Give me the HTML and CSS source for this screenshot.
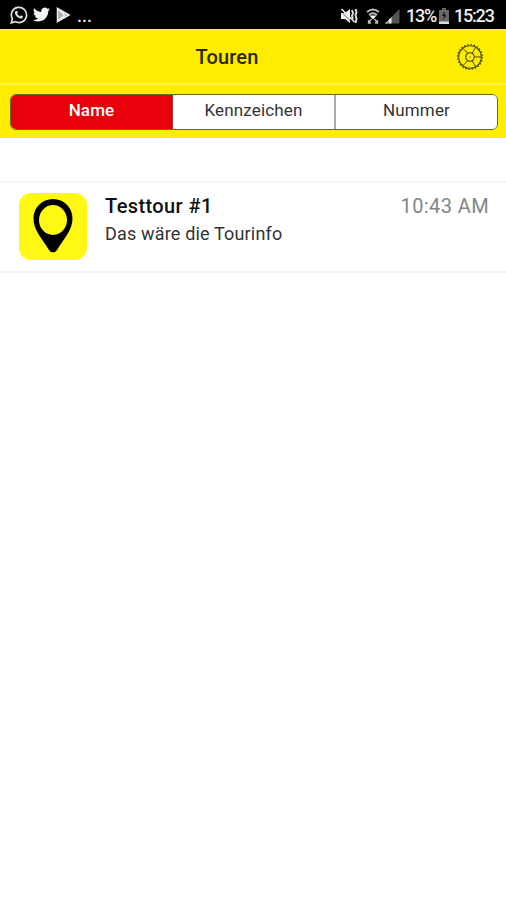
FILE: index.html
```
<!DOCTYPE html>
<html lang="de">
<head>
    <meta charset="UTF-8">
    <meta name="viewport" content="width=device-width, initial-scale=1.0">
    <title>Touren</title>
    <link rel="stylesheet" href="styles.css">
</head>
<body>
    <div class="status-bar">
        <div class="status-left">
            <svg class="icon-whatsapp" width="18" height="18" viewBox="0 0 18 18">
                <path d="M1.3 16.8l1.1-4.1a7.6 7.6 0 1 1 3 2.9z" fill="none" stroke="#ddd" stroke-width="1.7"/>
                <path d="M5.6 5.2c.7-.8 1.5-.7 1.8 0l.6 1.4-.8 1.2c.6 1.2 1.5 2 2.8 2.6l1-1.1 1.9.9c.4 1.4-.8 2.5-2.3 2.4-2.9-.4-5.5-3.1-5.7-5.8 0-.6.2-1.2.7-1.6z" fill="#ddd"/>
            </svg>
            <svg class="icon-twitter" width="17" height="15" viewBox="0 0 24 20">
                <path d="M23.9 2.6a10 10 0 0 1-2.8.8 4.9 4.9 0 0 0 2.2-2.7 10 10 0 0 1-3.1 1.2 4.9 4.9 0 0 0-8.4 4.5A14 14 0 0 1 1.7 1.2a4.9 4.9 0 0 0 1.5 6.6 4.9 4.9 0 0 1-2.2-.6 4.9 4.9 0 0 0 3.9 4.9 4.9 4.9 0 0 1-2.2.1 4.9 4.9 0 0 0 4.6 3.4A9.9 9.9 0 0 1 0 17.6 14 14 0 0 0 7.6 19.8c9.1 0 14-7.5 14-14.6a10 10 0 0 0 2.3-2.6z" fill="#f4f4f4"/>
            </svg>
            <svg class="icon-play" width="15" height="16" viewBox="0 0 15 16">
                <path d="M1 1l13 7-13 7z" fill="#aaa"/>
                <path d="M1.5 1.5v13l7-6.5zM1.5 1.5l11.5 6.5-11.5 6.5" fill="none" stroke="#eee" stroke-width="1.5"/>
            </svg>
            <span class="more">...</span>
        </div>
        <div class="status-right">
            <svg class="icon-mute" width="18" height="16" viewBox="0 0 18 16">
                <path d="M1 5h4l5-4v14l-5-4H1z" fill="#f4f4f4"/>
                <path d="M0 2.5l13 13" stroke="#000" stroke-width=".6"/>
                <path d="M1.5 1l13 13" stroke="#eee" stroke-width="1.6"/>
                <path d="M12 2l1 3-1 3 1 3M15.500 1l1 3-1 3 1 4-1 4" fill="none" stroke="#ddd" stroke-width="2"/>
            </svg>
            <svg class="icon-wifi" width="14" height="16" viewBox="0 0 14 16">
                <path d="M1 4q6-5 12 0M3 7q4-3.5 8 0" fill="none" stroke="#bbb" stroke-width="1.9"/>
                <path d="M3.5 7.5h7L7 11.5z" fill="#fff"/>
                <path d="M2.5 15l3-4M2.5 12v3H5M11.5 15l-3-4M11.5 12v3H9" fill="none" stroke="#bbb" stroke-width="1.3"/>
            </svg>
            <svg class="icon-signal" width="15" height="16" viewBox="0 0 15 16">
                <path d="M0 15.5L14.5 1v14.5z" fill="#555"/>
                <path d="M0 15.5l2.5-2.5v2.5zM3.5 12l3-3v6.500h-3z" fill="#eee"/>
            </svg>
            <span class="percent">13%</span>
            <svg class="icon-battery" width="10" height="16" viewBox="0 0 10 16">
                <path d="M3 0h4v2h3v14H0V2h3z" fill="#686868"/>
                <path d="M6 3L3 8h2l-1 4 3.500-5h-2z" fill="#111"/>
                <path d="M0 13.5h10V16H0z" fill="#ddd"/>
            </svg>
            <span class="clock">15:23</span>
        </div>
    </div>

    <header class="header">
        <h1 class="title">Touren</h1>
        <svg class="icon-gear" width="28" height="28" viewBox="-14 -14 28 28">
            <g fill="none" stroke="#4c4600">
                <circle r="11.3" stroke-width="1.1"/>
                <circle r="12.3" stroke-width="1.3" stroke-dasharray="1.6 1.62"/>
                <circle r="4.3" stroke-width="1.1"/>
                <path d="M4.3 0h7M2.150 3.7l3.5 6.1M-2.150 3.7l-5 5M-2.150-3.7l-5-5M2.150-3.7l3.5-6.1" stroke-width="1"/>
            </g>
            <circle r=".8" fill="#8a8000"/>
        </svg>
    </header>

    <nav class="filter">
        <div class="segments">
            <button class="segment active">Name</button>
            <button class="segment">Kennzeichen</button>
            <button class="segment">Nummer</button>
        </div>
    </nav>

    <main class="tour-list">
        <article class="tour">
            <div class="tour-icon">
                <svg width="40" height="54" viewBox="0 0 40 54">
                    <path fill-rule="evenodd" d="M20 0C9 0 .5 8.5 .5 19.5c0 12 9 20.5 15.3 31.2 2 3.4 6.4 3.4 8.4 0C30.5 40 39.5 31.5 39.5 19.5 39.5 8.5 31 0 20 0zM20 6a14 15 0 1 1 0 30 14 15 0 1 1 0-30z"/>
                </svg>
            </div>
            <div class="tour-text">
                <h2 class="tour-name">Testtour #1</h2>
                <p class="tour-info">Das wäre die Tourinfo</p>
            </div>
            <time class="tour-time">10:43 AM</time>
        </article>
    </main>
</body>
</html>
```
FILE: styles.css
```
* {
    box-sizing: border-box;
}

body {
    margin: 0;
    min-height: 900px;
    background-color: #fff;
    color: #111;
    font-family: Roboto, "Liberation Sans", sans-serif;
}

/* Status bar */
.status-bar {
    display: flex;
    justify-content: space-between;
    height: 29px;
    padding: 2px 11px 0 10px;
    background-color: #000;
    color: #eee;
}

.status-left,
.status-right {
    display: flex;
    align-items: center;
}

.icon-whatsapp {
    margin-bottom: 2px;
}

.icon-twitter {
    margin-left: 5px;
    margin-bottom: 2px;
}

.icon-play {
    margin-left: 6px;
    margin-bottom: 2px;
}

.more {
    margin-left: 6px;
    font-size: 18px;
    font-weight: 500;
    line-height: 26px;
}

.icon-wifi {
    margin-left: 8px;
}

.icon-signal {
    margin-left: 5px;
}

.percent,
.clock {
    font-size: 18px;
    font-weight: 500;
    line-height: 27px;
    letter-spacing: -1.2px;
}

.percent {
    width: 29px;
    margin-left: 6px;
}

.icon-battery {
    margin-left: 4px;
}

.clock {
    width: 40px;
    margin-left: 5px;
    margin-right: 1px;
}

/* Header */
.header {
    display: flex;
    align-items: center;
    justify-content: flex-end;
    height: 56px;
    padding-top: 1px;
    padding-right: 22px;
    border-bottom: 2px solid #fff04a;
    background-color: #ffed00;
}

.title {
    flex: 1;
    margin: 0;
    padding-right: 2px;
    font-size: 20px;
    font-weight: 500;
    line-height: 28px;
    letter-spacing: 0.2px;
    text-align: center;
    color: #2b2800;
}

/* Segmented filter */
.filter {
    height: 53px;
    padding: 9px 8px 0 10px;
    background-color: #ffed00;
}

.segments {
    display: flex;
    height: 36px;
    overflow: hidden;
    border: 1px solid #6b6420;
    border-radius: 6px;
    background-color: #fff;
}

.segment {
    flex: 1;
    padding: 0 0 4px;
    border: 0;
    border-left: 2px solid #aaa;
    background-color: #fff;
    color: #333;
    font-family: inherit;
    font-size: 17px;
    letter-spacing: 0.15px;
}

.segment.active {
    border-left: 0;
    background-color: #e8000b;
    color: #fff;
    font-weight: 500;
}

.segment.active + .segment {
    border-left: 1px solid #a33;
}

/* Tour list */
.tour-list {
    margin-top: 43px;
}

.tour {
    display: flex;
    height: 92px;
    padding: 10px 17px 0 19px;
    border-top: 2px solid #f5f5f5;
    border-bottom: 2px solid #f3f3f3;
}

.tour-icon {
    display: flex;
    justify-content: center;
    width: 68px;
    height: 67px;
    padding-top: 6px;
    border-radius: 12px;
    background-color: #fff714;
}

.tour-text {
    flex: 1;
    padding-left: 18px;
}

.tour-name {
    margin: 0;
    font-size: 20px;
    font-weight: 500;
    line-height: 26px;
    letter-spacing: 0.4px;
}

.tour-info {
    margin: 2px 0 0;
    font-size: 18px;
    line-height: 26px;
    letter-spacing: 0.17px;
    color: #333;
}

.tour-time {
    font-size: 20px;
    line-height: 26px;
    letter-spacing: 0.4px;
    color: #858585;
}
```
